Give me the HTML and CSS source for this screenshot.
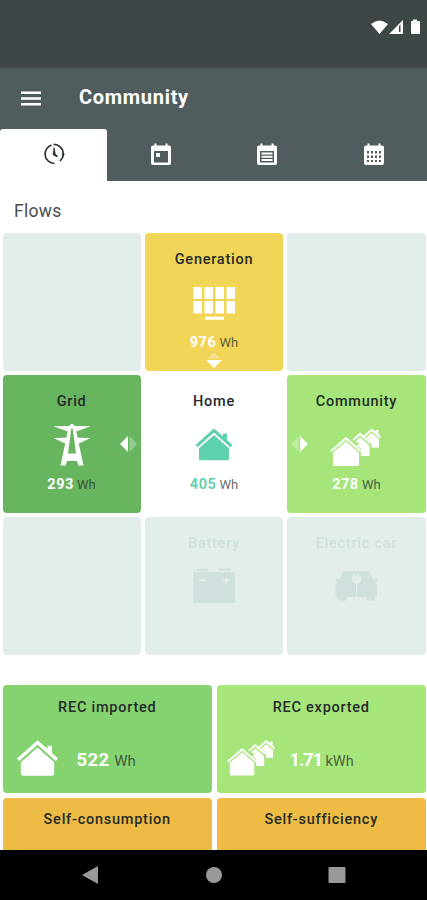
FILE: index.html
```html
<!DOCTYPE html>
<html lang="en">

<head>
    <meta charset="UTF-8">
    <meta name="viewport" content="width=device-width, initial-scale=1">
    <title>Community</title>
    <link rel="stylesheet" href="styles.css">
</head>

<body>

    <!-- icons used more than once -->
    <svg class="symbols">
        <symbol id="house" viewBox="0 0 37 32">
            <path d="M18.5 0 27.5 7.800V5H31.500v6.500l5.500 5-2 2.200L18.5 4 2 18.7 0 16.5z" />
            <path d="M18.5 6.500 33.5 19.800v10.200q0 2-2 2h-26q-2 0-2-2V19.800z" />
        </symbol>
        <symbol id="houses" viewBox="0 0 51 38">
            <path d="M41.5 0 45.500 3V1.500h3V5.500l2.500 2.700-1.200 1.500-8.300-7-8 6.800-1.300-1.300z" />
            <path d="M41.500 4.300 49 10.500v8.500h-7.500V14l-5-5z" />
            <path d="M30 4 41.500 14l-1.300 1.500L30 7l-6 5-1.500-1.300z" />
            <path d="M30 8.800 39.500 17v10.500H31V20l-4.500-3 3-2-4-2z" />
            <path d="M16 8.500 32 22.200l-1.400 1.600L16 11.300 1.400 23.800 0 22.200z" />
            <path d="M16 12.800 29 24V36.500q0 1-1 1H4q-1 0-1-1V24z" />
        </symbol>
    </svg>

    <div class="statusbar">
        <svg width="49" height="16" viewBox="0 0 49 16">
            <path d="M0 5Q8.500-2 17 5L8.500 15z" />
            <path fill-rule="evenodd" d="M18 15 32 1v14zM28 7v6h1.500V5.500z" />
            <path d="M40 2h2V.5h4V2h2q1 0 1 1v11q0 1-1 1h-7q-1 0-1-1V3z" />
        </svg>
    </div>

    <header class="toolbar">
        <button class="menu">
            <svg width="20" height="15" viewBox="0 0 20 15">
                <path d="M0 .5h20v2.400H0zM0 6.300h20v2.400H0zM0 12h20v2.400H0z" />
            </svg>
        </button>
        <h1>Community</h1>
    </header>

    <nav class="tabs">
        <button class="tab valgt">
            <svg width="22" height="22" viewBox="0 0 22 22">
                <path class="line" d="M11.500 20.500A9.500 9.500 0 0 1 8.500 2M10.500 1.400A9.500 9.500 0 0 1 20.300 11M20.300 11.500A9.500 9.500 0 0 1 17 18" />
                <path d="M10.500 4.500h1l1 6 2.500 3-1 .7-3.500-1.700q-1.500-1-.5-2.500zM18.500 10.500l3.300.5-1.600 3z" />
            </svg>
        </button>
        <button class="tab">
            <svg width="20" height="22" viewBox="0 0 20 22">
                <path fill-rule="evenodd" d="M2 2.500h1.500V.5h2v2h9v-2h2v2H18q2 0 2 2V20q0 2-2 2H2q-2 0-2-2V4.500q0-2 2-2zM3 8v11.500h14V8z" />
                <path d="M5 10h4v4H5z" />
            </svg>
        </button>
        <button class="tab">
            <svg width="20" height="22" viewBox="0 0 20 22">
                <path fill-rule="evenodd" d="M2 2.500h1.500V.5h2v2h9v-2h2v2H18q2 0 2 2V20q0 2-2 2H2q-2 0-2-2V4.500q0-2 2-2zM3 8v11.500h14V8z" />
                <path d="M4.500 9.500h11v2h-11zM4.500 12.700h11v2h-11zM4.500 16h11v2h-11z" />
            </svg>
        </button>
        <button class="tab">
            <svg width="20" height="22" viewBox="0 0 20 22">
                <path fill-rule="evenodd" d="M2 2.500h1.500V.5h2v2h9v-2h2v2H18q2 0 2 2V20q0 2-2 2H2q-2 0-2-2V4.500q0-2 2-2zM3 8v2.500h2V8zM7 8v2.500h2V8zM11 8v2.500h2V8zM15 8v2.500h2V8zM3 12.500v2.500h2v-2.500zM7 12.500v2.500h2v-2.500zM11 12.500v2.500h2v-2.500zM15 12.500v2.500h2v-2.500zM3 17v2h2v-2zM7 17v2h2v-2zM11 17v2h2v-2zM15 17v2h2v-2z" />
            </svg>
        </button>
    </nav>

    <main>
        <h2>Flows</h2>

        <section class="flows">
            <article class="tile"></article>
            <article class="tile generation">
                <h3>Generation</h3>
                <svg class="icon" viewBox="0 0 50 50">
                    <path d="M4.500 9h8.500v12h-8.500zM15.500 9h8.500v12h-8.500zM26.500 9h8.500v12h-8.500zM37.500 9h8.500v12h-8.500zM4.500 23h8.500v12.500h-8.500zM15.500 23h8.500v12.500h-8.500zM26.500 23h8.500v12.500h-8.500zM37.500 23h8.500v12.500h-8.500zM16 38.700h19v3H16z" />
                </svg>
                <p><b>976</b> Wh</p>
                <svg class="arrow down" viewBox="0 0 16 17">
                    <path class="faint" d="M2 7.500 8 1l6 6.500z" />
                    <path d="M0 9h16l-8 8z" />
                </svg>
            </article>
            <article class="tile"></article>

            <article class="tile grid">
                <h3>Grid</h3>
                <svg class="icon" viewBox="0 0 50 50">
                    <path fill-rule="evenodd" d="M22 6 25 3.500 28 6 43.500 6.200 29.300 11.500 30.700 17.700 43.500 18 31.800 23.500 36.500 45.500H31.500L30 41H20L18.500 45.500H13.500L18.200 23.500 6.500 18 19.300 17.700 20.700 11.500 6.500 6.200zM24.300 8.500 21 33.500H29L25.700 8.500z" />
                </svg>
                <p><b>293</b> Wh</p>
                <svg class="arrow right" viewBox="0 0 17 16">
                    <path d="M8 0v16L0 8z" />
                    <path class="faint" d="M9.500 0v16l7.500-8z" />
                </svg>
            </article>
            <article class="tile home">
                <h3>Home</h3>
                <svg class="icon" viewBox="0 0 50 50">
                    <use href="#house" x="6.500" y="8.500" width="37" height="32" />
                </svg>
                <p><b>405</b> Wh</p>
            </article>
            <article class="tile community">
                <h3>Community</h3>
                <svg class="icon wide" viewBox="0 0 54 50">
                    <use href="#houses" x="1" y="8.500" width="51" height="38" />
                </svg>
                <p><b>278</b> Wh</p>
                <svg class="arrow left" viewBox="0 0 17 16">
                    <path class="faint" d="M7.500 0v16L0 8z" />
                    <path d="M9 0v16l8-8z" />
                </svg>
            </article>

            <article class="tile"></article>
            <article class="tile off">
                <h3>Battery</h3>
                <svg class="icon" viewBox="0 0 50 50">
                    <path fill-rule="evenodd" d="M8 8q0-1.500 1.500-1.500h8q1.500 0 1.500 1.500v1H8zM30 8q0-1.500 1.500-1.500h9Q42 6.500 42 8v1H30zM4.500 10H46V41H4.500zM10 17.500V19h7v-1.500zM34 17.500V19h2.500v2H38v-2h2v-1.500h-2V16h-1.500v1.500z" />
                </svg>
            </article>
            <article class="tile off">
                <h3>Electric car</h3>
                <svg class="icon" viewBox="0 0 50 50">
                    <path fill-rule="evenodd" d="M13.500 9h24q1.500 0 2 1.500l3 8 3.500-2v2l-2 1.500q2 2 2 5v8.500q0 1.500-1.500 1.500H44v2q0 1.500-1.500 1.500h-6q-1.500 0-1.500-1.500v-2H16v2q0 1.500-1.500 1.500h-6Q7 38.500 7 37v-2q-2.500 0-2.500-1.500V25q0-3 2-5L4.500 18.500v-2L8.500 18.500l3-8q.5-1.500 2-1.500zM23 11.500v3h-2v4q0 2.500 4 3v13h1V21.500q4-.5 4-3v-4h-2v-3h-1.200v3h-2.600v-3z" />
                </svg>
            </article>
        </section>

        <section class="totals">
            <article class="total imported">
                <h3>REC imported</h3>
                <div class="row">
                    <svg width="41" height="36"><use href="#house" /></svg>
                    <p><b>522</b> Wh</p>
                </div>
            </article>
            <article class="total exported">
                <h3>REC exported</h3>
                <div class="row">
                    <svg width="48" height="36"><use href="#houses" /></svg>
                    <p><b>1.71</b> kWh</p>
                </div>
            </article>
            <article class="total self">
                <h3>Self-consumption</h3>
            </article>
            <article class="total self">
                <h3>Self-sufficiency</h3>
            </article>
        </section>
    </main>

    <footer>
        <svg width="18" height="20" viewBox="0 0 18 20"><path d="M17 1v18L1 10z" /></svg>
        <svg width="18" height="20" viewBox="0 0 18 20"><circle cx="9" cy="10" r="8" /></svg>
        <svg width="18" height="20" viewBox="0 0 18 20"><rect x=".5" y="2" width="17" height="16" rx="1" /></svg>
    </footer>

</body>

</html>
```
FILE: styles.css
```css
* {
    box-sizing: border-box;
}

body {
    margin: 0;
    height: 900px;
    display: flex;
    flex-direction: column;
    overflow: hidden;
    background-color: #fff;
    color: #262b2b;
    font-family: Roboto, "Liberation Sans", sans-serif;
}

h1, h2, h3, p {
    margin: 0;
}

button {
    border: 0;
    padding: 0;
    background: none;
}

svg {
    display: block;
    fill: currentColor;
}

.symbols {
    position: absolute;
    width: 0;
    height: 0;
}

.statusbar {
    flex: none;
    height: 68px;
    padding: 19px 7px 0 0;
    display: flex;
    justify-content: flex-end;
    background-color: #3e4648;
    color: white;
}

.toolbar {
    flex: none;
    height: 61px;
    padding-left: 21px;
    display: flex;
    align-items: center;
    gap: 38px;
    background-color: #515c5e;
    color: white;
}

.menu {
    color: white;
}

h1 {
    padding-bottom: 3px;
    font-size: 20px;
    line-height: 24px;
    font-weight: 700;
    letter-spacing: .7px;
}

.tabs {
    flex: none;
    height: 52px;
    display: grid;
    grid-template-columns: repeat(4, 1fr);
    background-color: #515c5e;
}

.tab {
    display: flex;
    justify-content: center;
    align-items: center;
    padding: 0 0 3px 1px;
    color: white;
}

.tab.valgt {
    background-color: white;
    color: #2c3537;
    border-radius: 3px 3px 0 0;
}

.line {
    fill: none;
    stroke: currentColor;
    stroke-width: 1.7;
}

main {
    flex: 1;
    min-height: 0;
    overflow: hidden;
}

h2 {
    padding: 18px 14px 0;
    height: 52px;
    font-size: 17.5px;
    line-height: 24px;
    font-weight: 400;
    letter-spacing: .3px;
    color: #4a4d4e;
}

h3 {
    font-size: 14.5px;
    line-height: 20px;
    font-weight: 500;
    letter-spacing: .75px;
    text-align: center;
}

.flows {
    display: grid;
    grid-template-columns: repeat(3, 1fr);
    grid-auto-rows: 137.7px;
    gap: 4.300px;
    padding: 0 1.500px 0 2.500px;
}

.tile {
    position: relative;
    padding-top: 17px;
    display: flex;
    flex-direction: column;
    align-items: center;
    border-radius: 4px;
    background-color: #e3edeb;
    color: white;
}

.tile h3 {
    color: #262b2b;
}

.tile p {
    margin-top: 5px;
    font-size: 13px;
    line-height: 20px;
    color: #262b2bbb;
}

.tile b {
    font-size: 14.5px;
    letter-spacing: .5px;
    color: white;
}

.icon {
    width: 50px;
    height: 50px;
    margin-top: 8px;
}

.icon.wide {
    width: 54px;
}

.tile.generation {
    background-color: #f1d556;
}

.tile.grid {
    background-color: #67b55f;
}

.tile.home {
    background-color: white;
    color: #5dd0ae;
}

.tile.home b {
    color: #5dd0ae;
    font-weight: 600;
}

.tile.community {
    background-color: #a5e57a;
}

.tile.off, .tile.off h3 {
    color: #d0e0df;
}

.arrow {
    position: absolute;
}

.arrow.down {
    width: 16px;
    height: 17px;
    left: 61px;
    bottom: 3px;
}

.arrow.left, .arrow.right {
    width: 17px;
    height: 16px;
    top: 61px;
}

.arrow.right {
    right: 4px;
}

.arrow.left {
    left: 4px;
}

.faint {
    opacity: .3;
}

.totals {
    display: grid;
    grid-template-columns: 1fr 1fr;
    grid-auto-rows: 108px;
    gap: 4.500px;
    padding: 30.500px 1px 0 2.500px;
}

.total {
    padding-top: 12.500px;
    border-radius: 4px;
}

.row {
    display: flex;
    align-items: center;
    height: 44px;
    margin-top: 18px;
    padding-left: 14px;
    color: white;
}

.row p {
    padding-top: 5px;
    margin-left: 19px;
    font-size: 15px;
    color: #262b2bbb;
}

.row b {
    margin-right: 1px;
    font-size: 18.5px;
    letter-spacing: .4px;
    color: white;
}

.imported {
    background-color: #84d370;
}

.exported {
    background-color: #a5e57a;
}

.exported .row {
    padding-left: 10px;
}

.exported .row p {
    margin-left: 15px;
    font-size: 14.5px;
}

.exported .row b {
    margin-right: 0;
    letter-spacing: -1.2px;
}

.self {
    background-color: #eebb44;
}

footer {
    flex: none;
    height: 50px;
    padding: 0 81px;
    display: flex;
    justify-content: space-between;
    align-items: center;
    background-color: black;
    color: #999;
}
```
